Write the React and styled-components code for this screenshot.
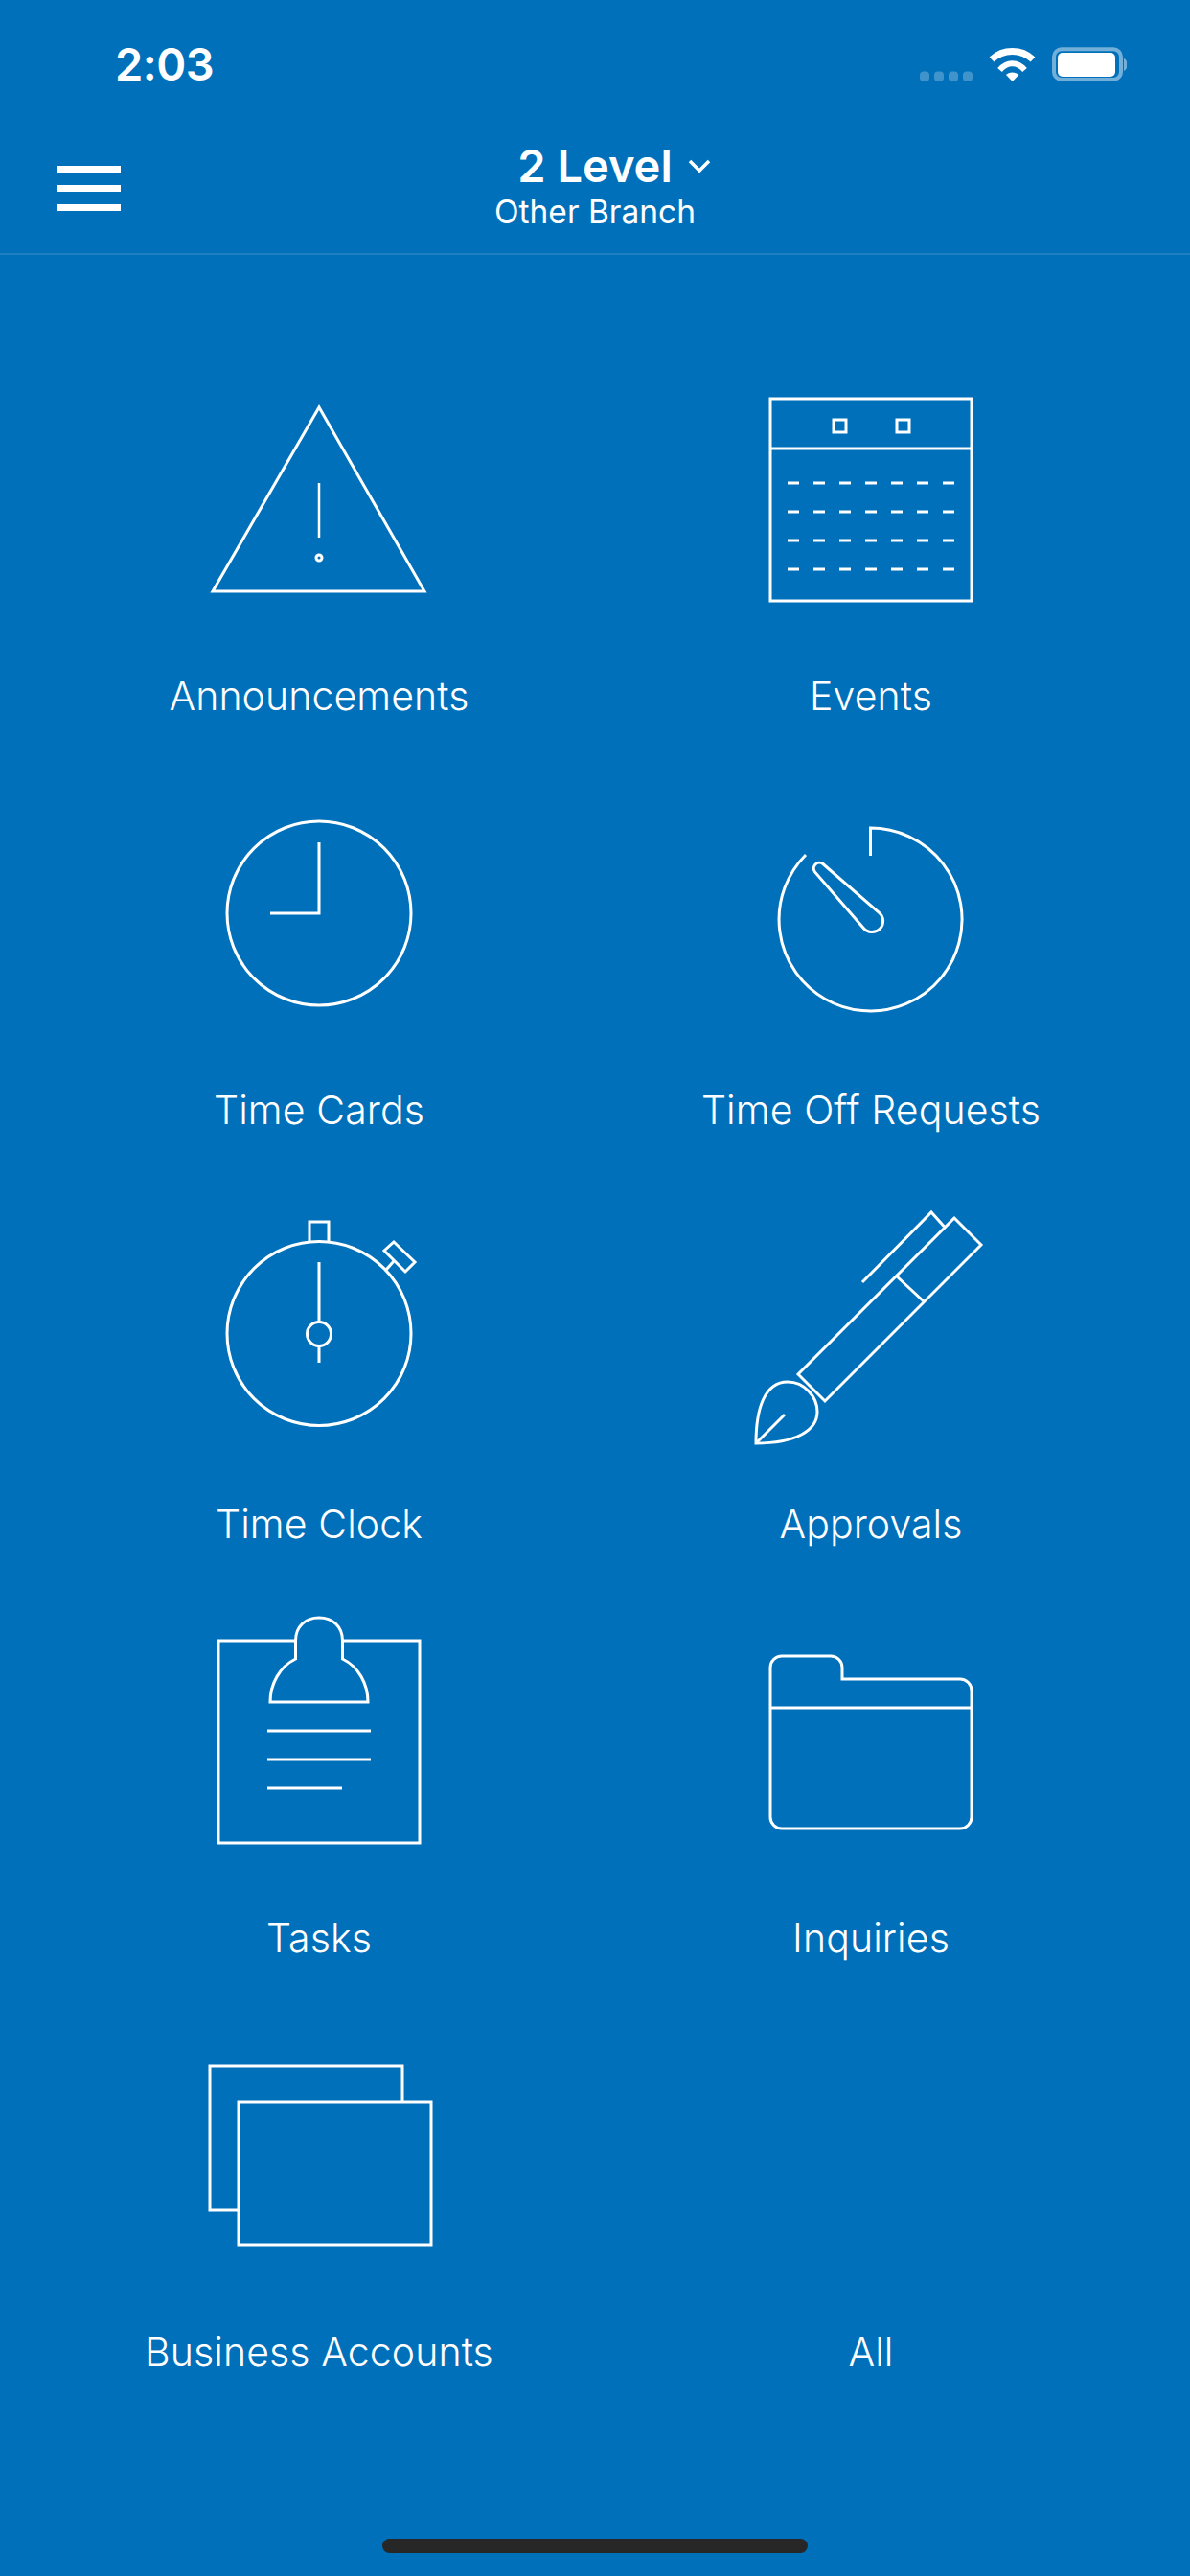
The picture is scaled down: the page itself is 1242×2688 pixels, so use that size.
import React from 'react';
import styled, {createGlobalStyle} from "styled-components";

const GlobalStyle = createGlobalStyle`
  html, body {
    margin: 0;
    padding: 0;
    background: #0070ba;
  }
`

const Screen = styled.div`
  width: 1242px;
  height: 2688px;
  overflow: hidden;
  display: flex;
  flex-direction: column;
  background: #0070ba;
  color: #fff;
  font-family: Inter, "Liberation Sans", sans-serif;
`

const StatusBar = styled.div`
  height: 48px;
  padding: 43px 66px 0 120px;
  display: flex;
  align-items: center;
  justify-content: space-between;
`

const Clock = styled.div`
  font-size: 47px;
  font-weight: 600;
  line-height: 48px;
  letter-spacing: -0.5px;
`

const StatusIcons = styled.div`
  display: flex;
  align-items: center;
`

const Nav = styled.header`
  height: 175px;
  box-sizing: border-box;
  display: grid;
  grid-template-columns: 1fr auto 1fr;
  align-items: start;
  border-bottom: 2px solid #1f80c1;
`

const MenuButton = styled.div`
  justify-self: start;
  margin: 82px 0 0 60px;
  width: 66px;
  display: flex;
  flex-direction: column;
  gap: 13px;
`

const MenuBar = styled.span`
  display: block;
  height: 7px;
  background: #fff;
`

const TitleBlock = styled.div`
  display: flex;
  flex-direction: column;
  align-items: center;
  padding-top: 56px;
`

const TitleRow = styled.div`
  display: flex;
  align-items: center;
  gap: 16px;
`

const Title = styled.div`
  font-size: 47px;
  font-weight: 600;
  line-height: 52px;
`

const Chevron = styled.svg`
  width: 24px;
  height: 14px;
  margin-right: -40px;
  fill: none;
  stroke: #fff;
  stroke-width: 3.5;
`

const Subtitle = styled.div`
  font-size: 33.5px;
  font-weight: 400;
  line-height: 44px;
`

const Grid = styled.main`
  padding: 118px 45px 0;
  display: grid;
  grid-template-columns: 576px 576px;
  row-gap: 65px;
`

const Cell = styled.div`
  display: flex;
  flex-direction: column;
  align-items: center;
`

const IconFrame = styled.svg`
  display: block;
  width: 300px;
  height: 260px;
  fill: none;
  stroke: #fff;
  stroke-width: 3;
`

const Label = styled.div`
  margin-top: 57px;
  font-size: 41px;
  font-weight: 300;
  line-height: 50px;
  letter-spacing: 0.1px;
  text-align: center;
`

const HomeIndicator = styled.div`
  margin: auto auto 24px;
  width: 444px;
  height: 15px;
  border-radius: 8px;
  background: #272727;
`

const Icon = ({col, row, children}) => {
    // icons are drawn in page coordinates, the viewBox picks out the cell
    const x = col === 0 ? 183 : 759;
    const y = 384 + row * 432;
    return <IconFrame viewBox={`${x} ${y} 300 260`}>{children}</IconFrame>;
}

const calendarDashes = [504, 534, 564, 594];

const items = [
    {
        label: "Announcements",
        icon: <>
            <path d="M333 425 L443 617 H222 Z"/>
            <path d="M333 504 V561" strokeWidth="2.5"/>
            <circle cx="333" cy="582" r="3"/>
        </>
    },
    {
        label: "Events",
        icon: <>
            <rect x="804" y="416" width="210" height="211"/>
            <path d="M804 468 H1014"/>
            <rect x="870" y="438" width="13" height="13"/>
            <rect x="936" y="438" width="13" height="13"/>
            {calendarDashes.map(y => (
                <path key={y} d={`M822 ${y} H996`} strokeDasharray="12 15"/>
            ))}
        </>
    },
    {
        label: "Time Cards",
        icon: <>
            <circle cx="333" cy="953" r="96"/>
            <path d="M333 879 V953 H282"/>
        </>
    },
    {
        label: "Time Off Requests",
        icon: <>
            <path d="M841 892 A95.5 95.5 0 1 0 908.5 864 V893"/>
            <path d="M858.9 901.5 L917.5 952.3 A11.5 11.5 0 1 1 901.3 968.5 L850.5 909.9 A6 6 0 0 1 858.9 901.5 Z"/>
        </>
    },
    {
        label: "Time Clock",
        icon: <>
            <circle cx="333" cy="1391.5" r="96"/>
            <path d="M323 1295 V1275 H343 V1295"/>
            <path d="M411 1296 L433 1317 L423 1327 L401 1305 Z"/>
            <path d="M411 1316 L403 1325"/>
            <circle cx="333" cy="1392" r="12.5"/>
            <path d="M333 1317 V1379 M333 1405 V1422"/>
        </>
    },
    {
        label: "Approvals",
        icon: <>
            <path d="M833 1434 L861 1462 L1024 1299 L996 1271 Z"/>
            <path d="M936 1332 L964 1358"/>
            <path d="M900 1338 L972 1265 L985.5 1280"/>
            <path d="M789 1506 C789 1470 798 1442 822 1442 C840 1442 853 1458 853 1473 C853 1493 830 1506 789 1506 Z"/>
            <path d="M790 1505 L819 1476"/>
        </>
    },
    {
        label: "Tasks",
        icon: <>
            <path d="M308.5 1712 H228 V1923 H438 V1712 H357.5"/>
            <path d="M282 1776 H384 C384 1757 374 1739 357.5 1731 V1712 C357.5 1697 347 1688 333 1688 C319 1688 308.5 1697 308.5 1712 V1731 C292 1739 282 1757 282 1776 Z"/>
            <path d="M279 1806 H387 M279 1836 H387 M279 1866 H357"/>
        </>
    },
    {
        label: "Inquiries",
        icon: <>
            <path d="M804 1782 V1740 A12 12 0 0 1 816 1728 H867 A12 12 0 0 1 879 1740 V1752 H1002 A12 12 0 0 1 1014 1764 V1896 A12 12 0 0 1 1002 1908 H816 A12 12 0 0 1 804 1896 Z"/>
            <path d="M804 1782 H1014"/>
        </>
    },
    {
        label: "Business Accounts",
        icon: <>
            <path d="M420 2192 V2156 H219 V2306 H249"/>
            <rect x="249" y="2193" width="201" height="150"/>
        </>
    },
    {label: "All"},
];

const App = () => {
    return (
        <Screen>
            <GlobalStyle/>
            <StatusBar>
                <Clock>2:03</Clock>
                <StatusIcons>
                    <svg width="216" height="40" viewBox="960 47 216 40">
                        <g fill="#fff" opacity="0.25">
                            <rect x="960" y="74.5" width="10" height="10.5" rx="4"/>
                            <rect x="975" y="74.5" width="10" height="10.5" rx="4"/>
                            <rect x="990" y="74.5" width="10" height="10.5" rx="4"/>
                            <rect x="1005" y="74.5" width="10" height="10.5" rx="4"/>
                        </g>
                        <g fill="none" stroke="#fff">
                            <path d="M1035 62 C1047 50.7 1066 50.7 1078 62" strokeWidth="7"/>
                            <path d="M1043.5 73 C1051 64 1062 64 1069.5 73" strokeWidth="6"/>
                        </g>
                        <path d="M1056.7 85 L1050 78 C1053 74.5 1060 74.5 1063.4 78 Z" fill="#fff"/>
                        <rect x="1100" y="51.3" width="70" height="31.7" rx="8" fill="none" stroke="#fff" strokeOpacity="0.45" strokeWidth="4"/>
                        <rect x="1104" y="55" width="60" height="25" rx="5" fill="#fff"/>
                        <path d="M1173 60.7 C1175.5 62 1176.5 64.5 1176.5 67.3 C1176.5 70 1175.5 72.6 1173 74 Z" fill="#fff" fillOpacity="0.45"/>
                    </svg>
                </StatusIcons>
            </StatusBar>
            <Nav>
                <MenuButton>
                    <MenuBar/>
                    <MenuBar/>
                    <MenuBar/>
                </MenuButton>
                <TitleBlock>
                    <TitleRow>
                        <Title>2 Level</Title>
                        <Chevron viewBox="0 0 24 14"><path d="M2 2 L12 12 L22 2"/></Chevron>
                    </TitleRow>
                    <Subtitle>Other Branch</Subtitle>
                </TitleBlock>
            </Nav>
            <Grid>
                {items.map((item, i) => (
                    <Cell key={item.label}>
                        <Icon col={i % 2} row={Math.floor(i / 2)}>{item.icon}</Icon>
                        <Label>{item.label}</Label>
                    </Cell>
                ))}
            </Grid>
            <HomeIndicator/>
        </Screen>
    );
}

export default App;
